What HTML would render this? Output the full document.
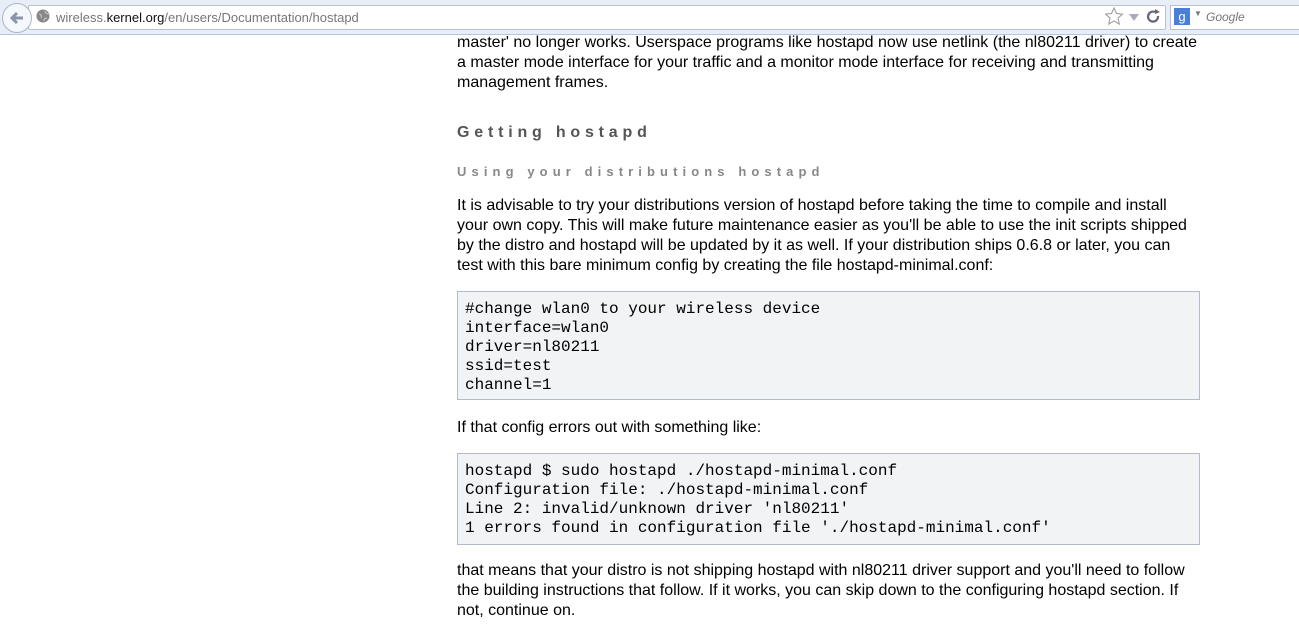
<!DOCTYPE html>
<html><head><meta charset="utf-8"><style>
body{margin:0;width:1299px;height:628px;overflow:hidden;background:#fff;font-family:"Liberation Sans",Arial,sans-serif;}
.tb{position:absolute;left:0;top:0;width:1299px;height:34px;background:#e8eef7;border-bottom:1px solid #b8c6d8;}
.url{position:absolute;left:28px;top:5px;width:1136px;height:23px;background:#fff;border:1px solid #b7c3d3;border-radius:2px;}
.back{position:absolute;left:2px;top:3px;width:28px;height:28px;border-radius:50%;background:#f4f7fb;border:1px solid #a9b6c8;}
.urltext{position:absolute;left:56px;top:10px;font-size:13px;color:#777;}
.urltext b{color:#111;font-weight:normal}
.search{position:absolute;left:1170px;top:5px;width:140px;height:23px;background:#fff;border:1px solid #b7c3d3;}
.p{position:absolute;left:457px;font-size:16px;line-height:20px;color:#000;margin:0;width:740px}
.h1{position:absolute;left:457px;top:124px;font-size:16px;font-weight:bold;letter-spacing:4.8px;color:#555;}
.h2{position:absolute;left:457px;top:164px;font-size:13px;font-weight:bold;letter-spacing:5.1px;color:#888;}
pre{position:absolute;left:457px;width:727px;margin:0;background:#f2f3f5;border:1px solid #b0bccb;padding:8px 7px;font-family:"Liberation Mono",monospace;font-size:16px;line-height:19px;color:#000;}
</style></head><body>
<div class="tb">
<div class="url"></div>
<div class="back"><svg width="28" height="28" viewBox="0 0 28 28"><path d="M20 14H9M14 9l-5 5 5 5" stroke="#8a96a6" stroke-width="3" fill="none"/></svg></div>
<svg style="position:absolute;left:36px;top:9px" width="14" height="14"><circle cx="7" cy="7" r="6.5" fill="#888"/><path d="M3 5c2 0 3 2 2 4M9 2c0 2 2 3 4 3M8 12c0-2 1-3 3-3" stroke="#ccc" fill="none"/></svg>
<div class="urltext">wireless.<b>kernel.org</b>/en/users/Documentation/hostapd</div>
<svg style="position:absolute;left:1105px;top:7px" width="60" height="20"><path d="M9 1l2.5 5.5 6 .6-4.5 4 1.3 6-5.3-3.1-5.3 3.1 1.3-6-4.5-4 6-.6z" fill="none" stroke="#999"/><path d="M24 7h10l-5 7z" fill="#aab"/><path d="M50 5a5 5 0 1 0 3 4" stroke="#667" stroke-width="2.2" fill="none"/><path d="M50 2l5 3-5 2z" fill="#667"/></svg>
<div class="search"></div>
<div style="position:absolute;left:1174px;top:8px;width:16px;height:17px;background:#4a7fd8;color:#fff;font-size:13px;text-align:center;line-height:17px">g</div>
<div style="position:absolute;left:1194px;top:9px;font-size:8px;color:#777">▼</div>
<div style="position:absolute;left:1206px;top:10px;font-size:12px;color:#777;font-style:italic">Google</div>
</div>
<p class="p" style="top:33px">master' no longer works. Userspace programs like hostapd now use netlink (the nl80211 driver) to create a master mode interface for your traffic and a monitor mode interface for receiving and transmitting management frames.</p>
<div class="h1">Getting hostapd</div>
<div class="h2">Using your distributions hostapd</div>
<p class="p" style="top:196px">It is advisable to try your distributions version of hostapd before taking the time to compile and install your own copy. This will make future maintenance easier as you'll be able to use the init scripts shipped by the distro and hostapd will be updated by it as well. If your distribution ships 0.6.8 or later, you can test with this bare minimum config by creating the file hostapd-minimal.conf:</p>
<pre style="top:291px;height:91px">#change wlan0 to your wireless device
interface=wlan0
driver=nl80211
ssid=test
channel=1</pre>
<p class="p" style="top:418px">If that config errors out with something like:</p>
<pre style="top:453px;height:74px">hostapd $ sudo hostapd ./hostapd-minimal.conf
Configuration file: ./hostapd-minimal.conf
Line 2: invalid/unknown driver 'nl80211'
1 errors found in configuration file './hostapd-minimal.conf'</pre>
<p class="p" style="top:561px">that means that your distro is not shipping hostapd with nl80211 driver support and you'll need to follow the building instructions that follow. If it works, you can skip down to the configuring hostapd section. If not, continue on.</p>
</body></html>
